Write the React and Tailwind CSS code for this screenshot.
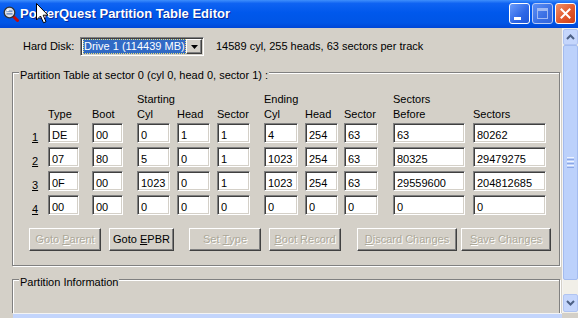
import React from "react";

const GRID =
  "grid grid-cols-[35px_44px_45px_40px_40px_47px_41px_39px_49px_80px_73px]";

const WIDTHS = [
  "w-[31px]",
  "w-[31px]",
  "w-[33px]",
  "w-[33px]",
  "w-[33px]",
  "w-[34px]",
  "w-[33px]",
  "w-[34px]",
  "w-[72px]",
  "w-[73px]",
];

const ROWS = [
  ["DE", "00", "0", "1", "1", "4", "254", "63", "63", "80262"],
  ["07", "80", "5", "0", "1", "1023", "254", "63", "80325", "29479275"],
  ["0F", "00", "1023", "0", "1", "1023", "254", "63", "29559600", "204812685"],
  ["00", "00", "0", "0", "0", "0", "0", "0", "0", "0"],
];

const SUNKEN =
  "bg-white border border-t-[#808080] border-l-[#808080] border-b-white border-r-white shadow-[inset_1px_1px_0_#404040,inset_-1px_-1px_0_#d4d0c8]";

const RAISED =
  "border border-t-white border-l-white border-b-[#404040] border-r-[#404040] shadow-[inset_-1px_-1px_0_#808080]";

function Edit({ w, value }) {
  return (
    <div className={`${w} h-[20px] ${SUNKEN} pl-[3px] leading-[22px] overflow-hidden whitespace-nowrap`}>
      {value}
    </div>
  );
}

function Btn({ cls, disabled, children }) {
  return (
    <div
      className={`${cls} h-[23px] ${RAISED} flex items-center justify-center whitespace-nowrap ${
        disabled ? "text-[#aca899] [text-shadow:1px_1px_0_#ffffff]" : "text-black"
      }`}
    >
      {children}
    </div>
  );
}

function TitleBar() {
  return (
    <div className="h-[28px] shrink-0 flex items-center bg-[linear-gradient(to_bottom,#3f8ffc_0%,#0f63f2_12%,#0058ec_45%,#0055e6_82%,#0046d6_100%)]">
      <svg width="16" height="16" viewBox="0 0 16 16" className="ml-[3px] -mt-[1px] shrink-0">
        <line x1="10" y1="10" x2="14.5" y2="14.5" stroke="#c40a0a" strokeWidth="3" strokeLinecap="round" />
        <circle cx="6.5" cy="6.5" r="5.3" fill="#dfe3ea" stroke="#333" strokeWidth="1.3" />
        <path d="M3.5 5.2h6M3.5 7.8h6" stroke="#5a7fb8" strokeWidth="1.2" />
        <circle cx="4.8" cy="4.3" r="1.1" fill="#fff" />
      </svg>
      <div className="ml-[1px] text-white font-bold text-[13px] leading-[16px] whitespace-nowrap [text-shadow:1px_1px_0_#0a2a9a]">
        PowerQuest Partition Table Editor
      </div>
      <div className="ml-auto mr-[2px] flex gap-[2px] -mt-[1px]">
        <div className="w-[21px] h-[21px] rounded-[3px] border border-white bg-[linear-gradient(135deg,#6b9cfb_0%,#2d66e6_60%,#2258d8_100%)] flex items-end">
          <div className="ml-[4px] mb-[3px] w-[7px] h-[3px] bg-white" />
        </div>
        <div className="w-[21px] h-[21px] rounded-[3px] border border-[#b8cbf6] bg-[linear-gradient(135deg,#5d8ff4_0%,#3a6fe4_60%,#3264dc_100%)] flex items-center justify-center">
          <div className="w-[11px] h-[11px] border border-[#9fb9f3] border-t-[3px]" />
        </div>
        <div className="w-[21px] h-[21px] rounded-[3px] border border-white bg-[linear-gradient(135deg,#f0926a_0%,#e2582d_55%,#cf3f15_100%)] flex items-center justify-center">
          <svg width="11" height="11" viewBox="0 0 11 11">
            <path d="M1.5 1.5L9.5 9.5M9.5 1.5L1.5 9.5" stroke="#fff" strokeWidth="2" strokeLinecap="square" />
          </svg>
        </div>
      </div>
    </div>
  );
}

function VScroll() {
  return (
    <div className="w-[16px] shrink-0 flex flex-col bg-[#f1efe8] border-l border-[#f4f4f4]">
      <div className="mt-[1px] h-[16px] rounded-[2px] bg-[#c5d6fc] border border-[#b0c4f2] flex items-center justify-center">
        <svg width="9" height="6" viewBox="0 0 9 6">
          <path d="M1 5L4.5 1.5L8 5" stroke="#4d6185" strokeWidth="2" fill="none" />
        </svg>
      </div>
      <div className="h-[235px] rounded-[2px] bg-[#bcd1fb] border border-[#a3bbef] flex flex-col items-center justify-center gap-[1px]">
        <div className="w-[7px] h-[1px] bg-[#eef3fe]" />
        <div className="w-[7px] h-[1px] bg-[#8ca7e6]" />
        <div className="w-[7px] h-[1px] bg-[#eef3fe]" />
        <div className="w-[7px] h-[1px] bg-[#8ca7e6]" />
        <div className="w-[7px] h-[1px] bg-[#eef3fe]" />
        <div className="w-[7px] h-[1px] bg-[#8ca7e6]" />
      </div>
      <div className="flex-1" />
      <div className="mb-[1px] h-[18px] rounded-[2px] bg-[#c5d6fc] border border-[#b0c4f2] flex items-center justify-center">
        <svg width="9" height="6" viewBox="0 0 9 6">
          <path d="M1 1L4.5 4.5L8 1" stroke="#4d6185" strokeWidth="2" fill="none" />
        </svg>
      </div>
    </div>
  );
}

function Cursor() {
  return (
    <svg
      width="14"
      height="22"
      viewBox="0 0 14 22"
      className="absolute left-[36px] top-[3px]"
    >
      <path
        d="M0.5 0.5L0.5 17L4.5 13L7.5 19.8L10 18.7L7.2 12.2L12 12.2Z"
        fill="#fff"
        stroke="#000"
        strokeWidth="1"
        strokeLinejoin="miter"
      />
    </svg>
  );
}

export default function App() {
  const headerA = ["", "", "", "Starting", "", "", "Ending", "", "", "Sectors", ""];
  const headerB = ["", "Type", "Boot", "Cyl", "Head", "Sector", "Cyl", "Head", "Sector", "Before", "Sectors"];
  return (
    <div className="relative w-[578px] h-[318px] overflow-hidden bg-[#d4d0c8] font-['Liberation_Sans',Arial,sans-serif] text-[11px] leading-[13px] text-black flex flex-col">
      <TitleBar />
      <div className="flex flex-1 min-h-0">
        <div className="w-[562px] flex flex-col pt-[9px] overflow-hidden">
          <div className="flex items-center h-[19px] pl-[23px]">
            <div className="w-[57px]">Hard Disk:</div>
            <div className={`w-[124px] h-[19px] ${SUNKEN} p-[1px] flex`}>
              <div className="ml-[1px] w-[103px] bg-[#316ac5] text-white outline-1 outline-dotted outline-[#e8dc78] -outline-offset-1 pl-[1px] flex items-center whitespace-nowrap">
                Drive 1 (114439 MB)
              </div>
              <div className={`ml-auto w-[16px] bg-[#d4d0c8] ${RAISED} flex items-center justify-center`}>
                <svg width="7" height="4" viewBox="0 0 7 4">
                  <path d="M0 0H7L3.5 4Z" fill="#000" />
                </svg>
              </div>
            </div>
            <div className="ml-[12px] whitespace-nowrap">14589 cyl, 255 heads, 63 sectors per track</div>
          </div>

          <div className="mt-[16px] ml-[12px] w-[548px] shrink-0 border border-[#808080] shadow-[inset_1px_1px_0_#ffffff,1px_1px_0_#ffffff] pb-[14px]">
            <div className="-mt-[4px] ml-[6px] px-[1px] w-fit bg-[#d4d0c8] leading-[13px] whitespace-nowrap">
              Partition Table at sector 0 (cyl 0, head 0, sector 1) :
            </div>
            <div className={`${GRID} mt-[10px] leading-[15px]`}>
              {headerA.map((h, i) => (
                <div key={"a" + i} className="whitespace-nowrap">{h}</div>
              ))}
              {headerB.map((h, i) => (
                <div key={"b" + i} className="whitespace-nowrap">{h}</div>
              ))}
            </div>
            <div className="mt-[1px] flex flex-col gap-[4px]">
              {ROWS.map((row, r) => (
                <div key={r} className={GRID}>
                  <div className="pl-[19px] pt-[4px] leading-[20px] h-[20px]">
                    <span className="underline">{r + 1}</span>
                  </div>
                  {row.map((v, c) => (
                    <Edit key={c} w={WIDTHS[c]} value={v} />
                  ))}
                </div>
              ))}
            </div>
            <div className="mt-[13px] flex">
              <Btn cls="ml-[16px] w-[72px]" disabled>
                Goto&nbsp;<span className="underline">P</span>arent
              </Btn>
              <Btn cls="ml-[8px] w-[65px]">
                Goto&nbsp;<span className="underline">E</span>PBR
              </Btn>
              <Btn cls="ml-[15px] w-[72px]" disabled>
                Set&nbsp;<span className="underline">T</span>ype
              </Btn>
              <Btn cls="ml-[8px] w-[72px]" disabled>
                <span className="underline">B</span>oot Record
              </Btn>
              <Btn cls="ml-[16px] w-[100px]" disabled>
                <span className="underline">D</span>iscard Changes
              </Btn>
              <Btn cls="ml-[4px] w-[90px]" disabled>
                <span className="underline">S</span>ave Changes
              </Btn>
            </div>
          </div>

          <div className="mt-[13px] ml-[12px] w-[548px] h-[80px] shrink-0 border border-[#808080] shadow-[inset_1px_1px_0_#ffffff,1px_1px_0_#ffffff]">
            <div className="-mt-[4px] ml-[6px] px-[1px] w-fit bg-[#d4d0c8] leading-[13px] whitespace-nowrap">
              Partition Information
            </div>
          </div>
        </div>
        <VScroll />
      </div>
      <div className="h-[5px] shrink-0 flex">
        <div className="w-[13px] bg-[#d4d0c8]" />
        <div className="flex-1 border-t border-[#f4f4f4] bg-[#c3d5fc]" />
        <div className="w-[16px] bg-[#d4d0c8]" />
      </div>
      <Cursor />
    </div>
  );
}
